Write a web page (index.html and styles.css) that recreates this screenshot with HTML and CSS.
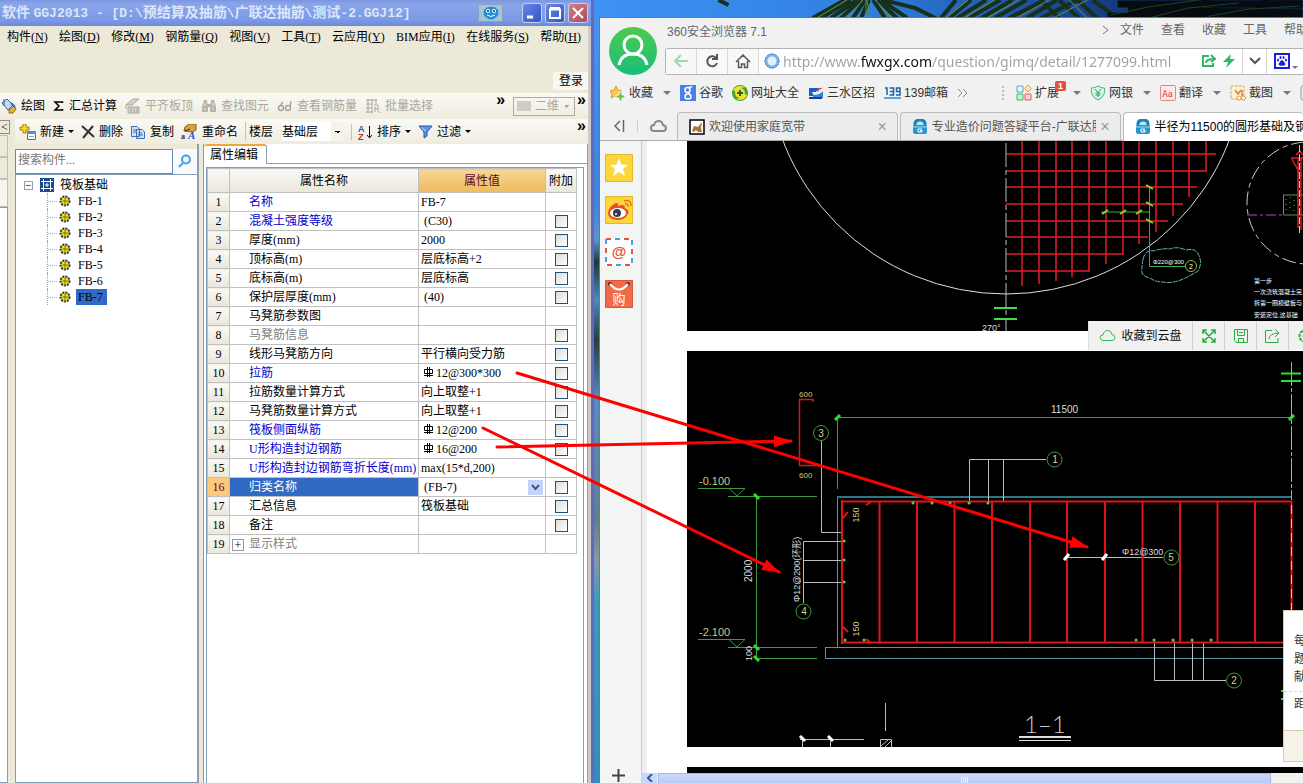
FILE: index.html
```html
<!DOCTYPE html>
<html lang="zh-CN">
<head>
	<meta charset="UTF-8">
	<title>GGJ2013</title>
	<link rel="stylesheet" href="styles.css">
</head>
<body>
	<div class="desktop">
		<svg class="wallpaper" viewBox="594 0 709 18" preserveAspectRatio="xMinYMin slice">
			<defs>
				<linearGradient id="sky" x1="0" x2="1"><stop offset="0" stop-color="#3f93f5"/><stop offset=".4" stop-color="#2f7fe0"/><stop offset=".7" stop-color="#16408a"/><stop offset="1" stop-color="#0b1830"/></linearGradient>
			</defs>
			<rect x="594" y="0" width="709" height="18" fill="url(#sky)"/>
			<g fill="none" stroke="#17301c" stroke-width="4">
				<path d="M818 18L850 0M826 18L856 0M836 18L862 0M846 18L866 0M858 18L870 0M866 18L874 0M890 18L878 0M902 18L882 0M912 18L886 0M725 0L735 5M940 18L920 8L888 0M945 18L960 0M953 18L975 0M961 18L990 0M972 18L1004 0M985 18L1016 0M998 18L1030 0M1012 18L1044 2M1030 18L1060 0M1044 18L1080 0M1062 18L1044 0M1082 18L1062 0M1100 18L1080 0M1120 18L1095 0"/>
				<path d="M1120 4H1303M1110 16H1303M1130 10L1303 13M1180 18L1210 0M1250 18L1270 0" stroke="#060b10" stroke-width="7"/>
			</g>
			<g fill="none" stroke="#5d8a4c">
				<path d="M822 18L852 0M852 18L868 0M871 18V0M875 18L872 0M897 18L880 0M950 18L972 0M968 18L998 0M990 18L1022 0M1020 18L1052 0M1056 18L1090 0M1090 18L1072 0"/>
				<path d="M1112 15L1150 7L1200 0M1150 18L1190 8L1240 3M1210 16L1250 9L1300 6" stroke="#20402c"/>
			</g>
		</svg>

		<!-- 钢筋软件窗口 -->
		<div class="app">
			<div class="appTitle">
				<span class="caption">软件 <span class="lat">GGJ2013 - [D:\</span>预结算及抽筋<span class="lat">\</span>广联达抽筋<span class="lat">\</span>测试<span class="lat">-2.GGJ12]</span></span>
				<span class="face"><svg width="18" height="16" viewBox="0 0 18 16"><path d="M2 5Q5 1 9 2Q13 1 16 5Q18 10 13 13Q9 16 5 13Q0 10 2 5Z" fill="#1c8fe0"/><circle cx="6" cy="6" r="2" fill="#fff"/><circle cx="12" cy="6" r="2" fill="#fff"/><circle cx="6" cy="6" r="1" fill="#123"/><circle cx="12" cy="6" r="1" fill="#123"/><path d="M5 10Q9 13 13 10" stroke="#fff" fill="none"/></svg></span>
				<button class="winBtn" aria-label="最小化"><svg width="18" height="18"><path d="M4 13H10" stroke="#fff" stroke-width="3"/></svg></button>
				<button class="winBtn" aria-label="最大化"><svg width="18" height="18"><path d="M4 5.500H14V14H4ZM4 4H14" stroke="#fff" stroke-width="2" fill="none"/></svg></button>
				<button class="winBtn close" aria-label="关闭"><svg width="18" height="18"><path d="M4 4L14 14M14 4L4 14" stroke="#fff" stroke-width="2"/></svg></button>
			</div>
			<div class="appBody">
				<nav class="appMenu">
					<a href="#">构件(<u>N</u>)</a><a href="#">绘图(<u>D</u>)</a><a href="#">修改(<u>M</u>)</a><a href="#">钢筋量(<u>Q</u>)</a><a href="#">视图(<u>V</u>)</a><a href="#">工具(<u>T</u>)</a><a href="#">云应用(<u>Y</u>)</a><a href="#">BIM应用(<u>I</u>)</a><a href="#">在线服务(<u>S</u>)</a><a href="#">帮助(<u>H</u>)</a>
				</nav>
				<div class="login"><button>登录</button></div>
				<div class="toolbar barTop">
					<button><svg width="16" height="16" viewBox="0 0 16 16"><path d="M1 5L6 1L12 7L7 12Z" fill="#c5daf2" stroke="#34649c"/><path d="M3 1V8" stroke="#34649c"/><path d="M8 12L13 8L15 11L12 15H8Z" fill="#e8b33c" stroke="#936817"/><path d="M10 5L14 9" stroke="#2b68b8" stroke-width="2"/></svg>绘图</button>
					<button><svg width="12" height="12" viewBox="0 0 12 12"><path d="M9.500 3V2H2L6 6L2 10H9.500V9" fill="none" stroke="#000" stroke-width="1.500"/></svg>汇总计算</button>
					<button disabled><svg width="16" height="16" viewBox="0 0 16 16"><path d="M1 7L8 1H14L7 7ZM3 9H14V15H3ZM6 10V14M9 11V14M12 10V14M1 7V11" fill="#d5d2c6" stroke="#aaa79a"/></svg>平齐板顶</button>
					<button disabled><svg width="16" height="16" viewBox="0 0 16 16"><path d="M3 2H6V5L7 6H9L10 5V2H13L15 9V14H9V9H7V14H1V9Z" fill="#b8b5a9"/><path d="M4 5V8M12 5V8M3 11H5M11 11H13" stroke="#efecdf"/></svg>查找图元</button>
					<button disabled><svg width="16" height="16" viewBox="0 0 16 16"><g fill="none" stroke="#aaa79a" stroke-width="1.500"><circle cx="4" cy="10" r="2.500"/><circle cx="11" cy="10" r="2.500"/><path d="M2 9L6 4M13 9L14 3"/></g></svg>查看钢筋量</button>
					<button disabled><svg width="16" height="16" viewBox="0 0 16 16"><path d="M1 2H12M1 6H7M1 10H7M1 14H8M3 1V15M7 1V15M11 1V6M9 7H13V12M10 9L15 15M10 9V14" fill="none" stroke="#aaa79a"/></svg>批量选择</button>
					<span class="more push">»</span>
					<span class="view"><i></i><select aria-label="视图" disabled><option>二维</option></select></span>
					<span class="more">»</span>
				</div>

				<div class="workArea">
					<div class="sideStrip"><button>&lt;</button><i></i><i></i><i class="lite"></i><div></div></div>
					<div class="work">
						<div class="toolbar barSub">
							<button><svg width="17" height="16" viewBox="0 0 17 16"><path d="M4 0H7V3H10V6H7V9H4V6H1V3H4Z" fill="#f7d92f" stroke="#a98208"/><path d="M8.500 7.500H16.500V15.500H8.500Z" fill="#fff" stroke="#3672b8"/><path d="M8 8.500H17" stroke="#4e8ee0" stroke-width="3"/><path d="M10 12.500H15" stroke="#8ab"/></svg>新建<i class="tri"></i></button>
							<button><svg width="14" height="14"><path d="M1 1L13 12M12 1L2 13" stroke="#333" stroke-width="2"/></svg>删除</button>
							<button><svg width="16" height="16" viewBox="0 0 16 16"><path d="M1.500 2.500H7L9.500 5V12.500H1.500ZM6.500 5.500H12L14.500 8V14.500H6.500Z" fill="#cfe2fa" stroke="#3b6eb8"/><path d="M3 6H7M3 8H6M8 9H12M8 11H13" stroke="#3b6eb8"/></svg>复制</button>
							<button><svg width="17" height="16" viewBox="0 0 17 16"><path d="M4 3L8 0H15V6L12 8L3 7Z" fill="#d7a440" stroke="#845c18"/><path d="M4 7L9 5" stroke="#3e2c10"/><text x="0" y="15" font-size="8" font-weight="bold" fill="#333">a</text><text x="7" y="15" font-size="11" font-weight="bold" font-style="italic" fill="#245cc0">A</text></svg>重命名</button>
							<label class="floor">楼层<select><option>基础层</option></select></label>
							<button class="sep"><svg width="16" height="16" viewBox="0 0 16 16"><text x="1" y="8" font-size="9" font-weight="bold" font-family="Liberation Sans" fill="#2a5fb0">A</text><text x="1" y="16" font-size="9" font-weight="bold" font-family="Liberation Sans" fill="#b0302a">Z</text><path d="M12.500 2V13M10 11L12.500 14L15 11" stroke="#111" fill="none"/></svg>排序<i class="tri"></i></button>
							<button><svg width="15" height="14" viewBox="0 0 15 14"><path d="M1 1H14L9 7V11L6 13V7Z" fill="#5d93ea" stroke="#2553a8"/><path d="M4 2.500L7 6" stroke="#d8e8ff"/></svg>过滤<i class="tri"></i></button>
							<span class="more push">»</span>
						</div>
						<div class="panes">
							<section class="treePane">
								<div class="search">
									<input type="text" placeholder="搜索构件..." aria-label="搜索构件">
									<button aria-label="搜索"><svg width="14" height="14"><circle cx="8" cy="5.500" r="4" fill="#eaf5ff" stroke="#4d9de0" stroke-width="2"/><path d="M5 9L1 13" stroke="#4d9de0" stroke-width="2"/></svg></button>
								</div>
								<div class="tree">
									<div class="root"><button aria-label="折叠">−</button><svg width="14" height="14"><path d="M0 0H14V14H0Z" fill="#1b4a94"/><path d="M1 3.500H13M1 10.500H13M3.500 1V13M10.500 1V13M7 5V9M5 7H9" stroke="#fff"/></svg><span>筏板基础</span></div>
									<ul>
										<li>FB-1</li><li>FB-2</li><li>FB-3</li><li>FB-4</li><li>FB-5</li><li>FB-6</li><li class="on">FB-7</li>
									</ul>
								</div>
							</section>
							<section class="propPane">
								<div class="tabStrip"><button>属性编辑</button></div>
								<div class="propBox">
									<table class="props">
										<colgroup><col class="cNo"><col class="cName"><col class="cVal"><col class="cAdd"></colgroup>
										<thead><tr><th></th><th>属性名称</th><th class="hot">属性值</th><th>附加</th></tr></thead>
										<tbody id="rows"></tbody>
									</table>
								</div>
							</section>
						</div>
					</div>
				</div>
			</div>
		</div>

		<!-- 浏览器窗口 -->
		<div class="browser">
			<header class="bHead">
				<svg class="avatar" width="48" height="48" viewBox="0 0 48 48"><defs><linearGradient id="av" x2="0" y2="1"><stop offset="0" stop-color="#4fc94f"/><stop offset="1" stop-color="#16bf78"/></linearGradient></defs><circle cx="24" cy="24" r="24" fill="url(#av)"/><g fill="none" stroke="#fff" stroke-width="3"><circle cx="24" cy="18" r="9"/><path d="M10 38Q12 27 24 27Q36 27 38 38"/></g></svg>
				<div class="bTop">
					<span>360安全浏览器 7.1</span>
					<nav><svg width="8" height="10"><path d="M1 1L6 5L1 9" fill="none" stroke="#777"/></svg><a href="#">文件</a><a href="#">查看</a><a href="#">收藏</a><a href="#">工具</a><a href="#">帮助</a></nav>
				</div>
				<div class="address">
					<button aria-label="后退"><svg width="16" height="14"><path d="M15 7H2M8 1L2 7L8 13" fill="none" stroke="#9bd9b2" stroke-width="2"/></svg></button>
					<button aria-label="刷新"><svg width="14" height="16"><path d="M11 5A5 5 0 1 0 12 10M12 1V6H7" fill="none" stroke="#555" stroke-width="2"/></svg></button>
					<button aria-label="主页"><svg width="16" height="15"><path d="M1 8L8 1L15 8M3.500 7V13.500H6.500V10H9.500V13.500H12.500V7" fill="none" stroke="#555" stroke-width="1.500"/></svg></button>
					<svg class="globe" width="16" height="16"><circle cx="8" cy="8" r="6" fill="#e4f1fd" stroke="#7db6ee" stroke-width="3"/><circle cx="8" cy="8" r="7" fill="none" stroke="#3d7fcc" stroke-dasharray="2 1"/></svg>
					<input class="url" type="text" aria-label="地址" value="http://www.fwxgx.com/question/gimq/detail/1277099.html">
					<svg width="15" height="14"><path d="M8 2H2V12H12V9M5 9Q5 5 13 5M10 1L14 5L10 8" fill="none" stroke="#2db965" stroke-width="2"/></svg>
					<svg width="12" height="14"><path d="M8 0L0 8H5L3 14L12 5H7Z" fill="#2db965"/></svg>
					<button class="drop" aria-label="展开"><svg width="12" height="8"><path d="M1 1L6 6L11 1" fill="none" stroke="#555" stroke-width="2"/></svg></button>
					<span class="engine"><svg width="16" height="16"><path d="M1 1H15V15H1Z" fill="#fff" stroke="#1d1de0" stroke-width="2"/><g fill="#1d1de0"><ellipse cx="4" cy="7" rx="1" ry="1.500"/><ellipse cx="6.500" cy="4.500" rx="1" ry="1.500"/><ellipse cx="9.500" cy="4.500" rx="1" ry="1.500"/><ellipse cx="12" cy="7" rx="1" ry="1.500"/><path d="M8 7Q9 7 11.500 11Q11 13.500 8 12.500Q5 13.500 4.500 11Q7 7 8 7Z"/></g></svg><i class="tri"></i></span>
				</div>
			</header>

			<div class="bookmarks">
				<a href="#"><svg width="16" height="16"><path d="M6 1L8 5L12 6L9 9V13L5 11L1 13L2 9L0 6L4 5Z" fill="#fbc94c" stroke="#d99b2c"/><path d="M9 7H12V10H15V13H12V16H9V13H6V10H9Z" fill="#6cc13a" stroke="#fff"/></svg>收藏<i class="tri"></i></a>
				<a href="#"><svg width="16" height="16"><path d="M0 0H16V16H0Z" fill="#4a80e8"/><g fill="none" stroke="#fff" stroke-width="1.500"><circle cx="7.500" cy="5" r="2.500"/><ellipse cx="8" cy="11.500" rx="3" ry="2.500"/><path d="M9 2H12M9 7V9"/></g></svg>谷歌</a>
				<a href="#"><svg width="16" height="16"><circle cx="8" cy="8" r="8" fill="#3fa535"/><path d="M1 5Q5-1 13 2Q7 3 4 7ZM15 10Q12 17 4 14Q10 13 12 9Z" fill="#f6dd2c"/><circle cx="8" cy="8" r="5" fill="#f6dd2c"/><path d="M8 5V11M5 8H11" stroke="#1d6b20" stroke-width="2"/></svg>网址大全</a>
				<a href="#"><svg width="16" height="14"><path d="M1 2H11L8 6H4L6 10H1Z" fill="#1c5fc0"/><path d="M5 9Q12 9 15 5V12H5Z" fill="#2f86e0"/><path d="M9 4Q11 1 15 2Q11 3 10 6Z" fill="#e03838"/><path d="M1 12H14" stroke="#123f90" stroke-width="2"/></svg>三水区招</a>
				<a href="#"><svg width="17" height="12"><path d="M1 1H3V8M5.500 1H9.500V8H5.500M6 4.500H9.500M16 4.500H12.500V1H16V8H12" fill="none" stroke="#1a63ad" stroke-width="1.500"/><path d="M0 11H17" stroke="#4eaad8" stroke-width="2"/></svg>139邮箱</a>
				<svg width="11" height="10"><path d="M1 1L5 5L1 9M6 1L10 5L6 9" fill="none" stroke="#888"/></svg>
				<div class="plugins">
					<i class="dots"></i>
					<a href="#"><svg width="16" height="16"><g fill="#e9f4fa" stroke="#54a7cf"><path d="M1 1H7V7H1Z"/><path d="M1 9H7V15H1Z" fill="#c9efd3" stroke="#41b96a"/><path d="M9 9H15V15H9Z" fill="#fbd0ce" stroke="#e5605a"/><path d="M12 0L15.500 3.500L12 7L8.500 3.500Z" fill="#fce3b6" stroke="#eda030"/></g></svg><span class="ext">扩展<b>1</b></span><i class="tri"></i></a>
					<a href="#"><svg width="16" height="16"><path d="M8 1Q11 3 14.500 3Q16 11 8 15Q0 11 1.500 3Q5 3 8 1Z" fill="#d9f5e4" stroke="#3cb878"/><path d="M5 4L8 7.500L11 4M8 7.500V12M5.500 8H10.500M5.500 10H10.500" fill="none" stroke="#2aa565"/></svg>网银<i class="tri"></i></a>
					<a href="#"><svg width="16" height="16"><rect x=".5" y=".5" width="15" height="15" rx="1" fill="#fde7e6" stroke="#d98c89"/><text x="2" y="12" font-size="9" font-family="Roboto" fill="#d9433c">Aa</text></svg>翻译<i class="tri"></i></a>
					<a href="#"><svg width="16" height="16"><path d="M1 1H14V14H1Z" fill="#fdf0d2" stroke="#e8a93c" stroke-dasharray="3 1"/><path d="M5 5L8 9L11 5M12 5V11" fill="none" stroke="#c98b36" stroke-width="1.500"/><circle cx="9" cy="13" r="2" fill="#fff" stroke="#e8942c"/><circle cx="13.500" cy="13" r="2" fill="#fff" stroke="#e8942c"/></svg>截图<i class="tri"></i></a>
					<svg width="16" height="16"><rect x="1" y="1" width="14" height="14" rx="2" fill="#eee" stroke="#999"/></svg>
				</div>
			</div>

			<div class="tabs">
				<div class="tabTools"><svg width="12" height="12"><path d="M7 1L2 6L7 11M10.500 0V12" fill="none" stroke="#666" stroke-width="1.500"/></svg><i></i><svg width="17" height="14"><path d="M4 12Q1 12 1 9Q1 6 4 6Q5 2 9 2Q12 2 13 6Q16 7 16 9Q16 12 13 12Z" fill="none" stroke="#888" stroke-width="2"/></svg></div>
				<a class="tab" href="#"><svg width="16" height="16"><path d="M1 1H15V15H1Z" fill="#fff" stroke="#000" stroke-width="1.500"/><path d="M3 12L5 7L9 8L13 3L12 9L13 13H9L7 11L5 13Z" fill="#a67834"/></svg><span>欢迎使用家庭宽带</span><b>×</b></a>
				<a class="tab" href="#"><svg width="16" height="16"><use href="#lock"/></svg><span>专业造价问题答疑平台-广联达服</span><b>×</b></a>
				<a class="tab active" href="#"><svg width="16" height="16"><g id="lock"><path d="M3 8V5Q3 1 8 1Q13 1 13 5V8" fill="#bfe6f7" stroke="#1d7fb8" stroke-width="3"/><rect x="1" y="6" width="14" height="9" rx="2" fill="#2795cf"/><path d="M1 8H15" stroke="#9adcf5"/><path d="M10 10H6V13H10V11.500H8" fill="none" stroke="#fff"/></g></svg><span>半径为11500的圆形基础及钢</span></a>
			</div>

			<div class="bMain">
				<aside class="rail">
					<a href="#" aria-label="收藏"><svg width="28" height="28"><path d="M.5.5H27.500V27.500H.5Z" fill="#fcd63a" stroke="#e3b62c"/><path d="M14 4L16.500 10.500L23 11L18 15L20 22L14 18L8 22L10 15L5 11L11.500 10.500Z" fill="#fff"/></svg></a>
					<a href="#" aria-label="微博"><svg width="28" height="28"><path d="M.5.5H27.500V27.500H.5Z" fill="#fcd63a" stroke="#e3b62c"/><path d="M3 17Q4 10 11 7Q14 7 13 10Q20 7 20 12Q25 14 23 18Q20 24 12 24Q3 23 3 17Z" fill="#e8502c"/><ellipse cx="13" cy="17" rx="8" ry="5" fill="#fff"/><circle cx="12" cy="17" r="4" fill="#333b4d"/><circle cx="11" cy="18" r="1" fill="#fff"/><path d="M20 8Q23 7 23 11M19 5Q26 3 26 10" fill="none" stroke="#e8742c" stroke-width="1.500"/></svg></a>
					<a href="#" aria-label="邮箱"><svg width="28" height="28"><path d="M0 0H28V28H0Z" fill="#fff"/><path d="M1 1H27V27H1Z" fill="none" stroke="#df5648" stroke-width="2" stroke-dasharray="5 13"/><path d="M1 1H27V27H1Z" fill="none" stroke="#4a9fd8" stroke-width="2" stroke-dasharray="5 13" stroke-dashoffset="-9"/><text x="14" y="19" font-size="15" font-weight="bold" font-family="Liberation Sans" text-anchor="middle" fill="#e8502c">@</text></svg></a>
					<a href="#" aria-label="购物"><svg width="28" height="28"><path d="M.5.5H27.500V27.500H.5Z" fill="#f2694a" stroke="#d9583a"/><circle cx="5" cy="4" r="2" fill="#5c2a18"/><circle cx="23" cy="4" r="2" fill="#5c2a18"/><path d="M5 4Q14 15 23 4" fill="none" stroke="#fff" stroke-width="2"/><text x="14" y="24" font-size="13" font-family="Noto Sans CJK SC" text-anchor="middle" fill="#fff">购</text></svg></a>
					<button aria-label="添加"><svg width="13" height="13"><path d="M6.500 0V13M0 6.500H13" stroke="#444" stroke-width="2"/></svg></button>
				</aside>
				<div class="pageWrap">
					<div class="page">
						<svg class="cad plan" viewBox="687 141 616 190" preserveAspectRatio="xMinYMin slice">
							<g fill="none" stroke="#e01c24" stroke-width="1.500">
								<path d="M1022 141V286M1039 141V284M1056 141V281M1072 141V277M1089 141V272M1106 141V264M1123 141V255M1139 141V244M1156 141V232M1173 141V216M1189 141V197M1206 141V171"/>
								<path d="M1006 154H1216M1006 171H1207M1006 187H1197M1006 204H1183M1006 221H1168M1006 237H1148M1006 254H1123M1006 271H1089"/>
							</g>
							<circle cx="1006" cy="55" r="239" fill="none" stroke="#ddd"/>
							<path d="M1006 143V331" stroke="#bbb" stroke-dasharray="24 3 5 3" fill="none"/>
							<path d="M994 308H1017M994 319H1017" stroke="#3be04a" stroke-width="2"/>
							<text x="982" y="331" font-size="9" fill="#ddd">270°</text>
							<path d="M1101 212H1149M1149.500 186V266.500H1185" fill="none" stroke="#35b046"/>
							<path d="M1102 214L1108 210M1120 214L1126 210M1136 214L1142 210M1146 185L1153 189M1146 202L1153 206M1146 219L1153 223" stroke="#8ed62c" stroke-width="2"/>
							<circle cx="1191" cy="266" r="5.500" fill="none" stroke="#8ac03a"/>
							<text x="1189" y="269" font-size="7" fill="#fff">2</text>
							<text x="1153" y="264" font-size="6" fill="#fff">Φ220@300</text>
							<path d="M1143 259Q1146 249 1153 251Q1163 248 1170 249Q1177 246 1186 250Q1196 248 1198 254Q1203 262 1198 271Q1190 276 1183 279Q1172 284 1163 282Q1155 282 1150 278Q1140 276 1142 268Q1142 264 1143 259Z" fill="none" stroke="#5fb8bd" stroke-dasharray="5 1"/>
							<circle cx="1308" cy="203" r="61" fill="none" stroke="#ccc" stroke-dasharray="14 4 5 4"/>
							<path d="M1247 215H1284" stroke="#b04cb8" stroke-dasharray="10 3 3 3"/>
							<path d="M1283.500 195H1303M1283.500 195V215H1303" fill="none" stroke="#5f9a48"/>
							<path d="M1286 199V213M1290 197V211M1294 200V213" stroke="#45bf45" stroke-dasharray="1 4"/>
							<path d="M1291 158H1303M1292 159L1300 174M1296 155L1300 151L1303 155M1298 158V228M1301 158V230" fill="none" stroke="#e01c24" stroke-width="1.500"/>
							<path d="M1299.500 145V234" stroke="#ccc" stroke-dasharray="7 2"/>
							<g fill="#fff" font-size="6"><text x="1254" y="283">第一步</text><text x="1254" y="294">一次浇筑混凝土完</text><text x="1254" y="305">拆第一圈模壁板与</text><text x="1254" y="317">安装定位,这基础</text></g>
						</svg>
						<svg class="cad section" viewBox="687 351 616 396" preserveAspectRatio="xMinYMin slice">
							<g fill="none" stroke="#3c9a44">
								<path d="M837.500 489V417.500H1291M698 488.500H745L737 496L729 488.500M728 496.500H817M756.500 496V658M698 639.500H745L737 647L729 639.500M728 647.500H817M756 658.500H817"/>
								<circle cx="821" cy="433" r="7.500"/><circle cx="1054.500" cy="459.500" r="7.500"/><circle cx="803.500" cy="611.500" r="7.500"/><circle cx="1234" cy="680.500" r="7.500"/><circle cx="1171.500" cy="557.500" r="7.500"/>
							</g>
							<path d="M835 420L840 415M1289 420L1294 415M754 494L759 499M754 645L759 650M754 656L759 661" stroke="#28e030" stroke-width="3"/>
							<path d="M1281 373.500H1301M1281 381H1301M1281 691H1290M1281 699H1290" stroke="#28e030" stroke-width="2"/>
							<path d="M837.500 647V496.500M825.500 647.500H1303M825.500 658.500H1303M825.500 647V659" fill="none" stroke="#4d9aa5"/>
							<path d="M837 497H1292" stroke="#2f7388" stroke-width="2"/>
							<path d="M1291.500 362V500" stroke="#aaa" stroke-dasharray="24 2 4 2"/>
							<g fill="none" stroke="#bbb">
								<path d="M821.500 441V532.500H842M969.500 502V459.500H1046M988.500 459V502M1003.500 459V502"/>
								<path d="M842 541.500H803.500V603M803 560.500H842M803 582.500H842M1154.500 641V680.500H1226M1174.500 641V680M1192.500 641V680M1203.500 643V680M1067 557.500H1163"/>
								<path d="M885.500 703V731M800 739.500H864M802.500 739V747M830.500 739V747M880.500 747V739.500H891.500V747M881 746L888 740M885 747L891 741"/>
							</g>
							<g fill="none" stroke="#e01418">
								<path d="M813 402V399.500H799.500V465.500H820" stroke-width="1.500"/>
								<path d="M879.500 501V642M917 501V642M954.500 501V642M992 501V642M1030 501V642M1067 501V642M1105 501V642M1142.500 501V642M1180 501V642M1217.500 501V642M1255 501V642" stroke-width="2"/>
								<path d="M842 500V644M841 501.500H1292M841 642.500H1292M1291.500 501V642M842 519L848 512M866 505L871 502M842 626L848 632M866 639L871 643" stroke-width="2"/>
							</g>
							<path d="M1291.500 505V642" stroke="#ccc" stroke-dasharray="9 5"/>
							<path d="M913 503h.1M932 503h.1M950 503h.1M969 503h.1M988 503h.1M844 541h.1M844 560h.1M844 582h.1M845 640h.1M864 640h.1M1136 640h.1M1154 640h.1M1173 640h.1M1192 640h.1M1211 640h.1" stroke="#4fd04a" stroke-width="3" stroke-linecap="round"/>
							<path d="M1064 560L1069 554M1102 560L1107 554M800 736L805 741M828 736L833 741" stroke="#fff" stroke-width="3"/>
							<g fill="#cfc77d" font-size="11"><text x="699" y="485">-0.100</text><text x="699" y="636">-2.100</text></g>
							<g fill="#cfc77d" font-size="8"><text x="799" y="397">600</text><text x="799" y="478">600</text></g>
							<g fill="#d9cf86" font-size="10" text-anchor="middle"><text x="821" y="437">3</text><text x="1055" y="463">1</text><text x="804" y="615">4</text><text x="1234" y="684">2</text><text x="1171" y="561">5</text>
								<text transform="translate(859 515) rotate(-90)" font-size="9">150</text><text transform="translate(859 629) rotate(-90)" font-size="9">150</text></g>
							<g fill="#ddd" font-size="10"><text x="1051" y="413">11500</text><text x="1122" y="555" font-size="9">Φ12@300</text><text transform="translate(752 582) rotate(-90)">2000</text><text transform="translate(752 661) rotate(-90)" font-size="9">100</text><text transform="translate(800 602) rotate(-90)" font-size="9">Φ12@200(环形)</text></g>
							<text class="mark" x="1045" y="733">1–1</text>
							<path d="M1019 737H1071" stroke="#ddd" stroke-width="2"/><path d="M1019 740.500H1071" stroke="#ddd"/>
						</svg>
						<div class="cad next"></div>
						<div class="saveBar">
							<button><svg width="17" height="13"><path d="M4 11.500Q1 11 1 8.500Q1 6 4 6Q5 1.500 9 1.500Q12 1.500 13 5.500Q16 6 16 8.500Q16 11.500 13 11.500Z" fill="none" stroke="#33b84c"/></svg>收藏到云盘</button>
							<button aria-label="全屏"><svg width="14" height="14"><path d="M1 5V1H5M9 1H13V5M13 9V13H9M5 13H1V9M1 1L13 13M13 1L1 13" fill="none" stroke="#22b03c" stroke-width="1.500"/></svg></button>
							<button aria-label="保存"><svg width="14" height="14"><path d="M.5.5H13.500V13.500H2.500L.5 11.500ZM3.500.5V6.500H10.500V.5M4.500 13V9.500H9.500V13M5 3.500H9" fill="none" stroke="#22b03c"/></svg></button>
							<button aria-label="分享"><svg width="15" height="14"><path d="M7 1.500H.5V13.500H13V9M4 10Q4 4.500 14 4M10 .5L14 4L10 8" fill="none" stroke="#22b03c"/></svg></button>
							<button aria-label="设置"><svg width="14" height="14"><circle cx="7" cy="7" r="5.500" fill="none" stroke="#22b03c" stroke-width="2" stroke-dasharray="3 1"/><circle cx="7" cy="7" r="2" fill="none" stroke="#22b03c"/></svg></button>
						</div>
						<div class="notice"><p>每<br>题<br>献</p><p>距</p><footer></footer></div>
					</div>
					<div class="hScroll"><button aria-label="向左"><svg width="6" height="8"><path d="M5 0L1 4L5 8" fill="none" stroke="#3b5a94" stroke-width="2"/></svg></button><i></i></div>
				</div>
			</div>
		</div>

		<!-- 标注箭头 -->
		<svg class="arrows">
			<defs><marker id="head" markerUnits="userSpaceOnUse" markerWidth="18" markerHeight="12" refX="17" refY="6" orient="auto"><path d="M0 0L18 6L0 12Z" fill="#f00"/></marker></defs>
			<g stroke="#f00" stroke-width="3" stroke-linecap="round">
				<path d="M517 373L1087 547" marker-end="url(#head)"/><path d="M497 447L791 441" marker-end="url(#head)"/><path d="M483 428L779 572" marker-end="url(#head)"/>
			</g>
		</svg>
	</div>
	<script src="script.js"></script>
</body>
</html>
```
FILE: styles.css
```css
*{box-sizing: border-box;}
html,body,ul,p{margin:0px;padding:0px;}
ul{
	list-style: none;
}
a{
	color: inherit;
	text-decoration: none;
}
button,select,input{
	font: inherit;
	color: inherit;
	margin: 0;
	padding: 0;
	border: 0;
	border-radius: 0;
	background: none;
}
select{
	appearance: none;
}
svg{
	flex: none;
}
body{
	font-size: 12px;
	line-height: 16px;
	color: #000;
	white-space: nowrap;
	overflow: hidden;
}
.tri{
	border: 3px solid transparent;
	border-top-color: #000;
	border-bottom: 0;
}
.desktop{
	position: relative;
	height: 100vh;
	display: grid;
	grid-template-columns: minmax(0,594fr) minmax(0,709fr);
	background: linear-gradient(#4a94ec 0,#3c84dc 200px,#5a94cc 240px,#1c3a34 262px,#5088b8 300px,#24403c 340px,#5a8cc0 400px,#5f7f8c 520px,#8899a4 560px,#3c9ab8 600px,#2f8fb8 100%);
}
.wallpaper{
	position: absolute;
	top: 0;
	right: 0;
	width: 55%;
	height: 18px;
}

/* 左侧软件 */
.app{
	position: relative;
	display: flex;
	flex-direction: column;
	min-height: 0;
	border-right: 3px solid #6468bd;
	font-family: "Liberation Serif","Noto Sans CJK SC",serif;
	background: #ece9d8;
}
.appTitle{
	display: flex;
	align-items: center;
	gap: 3px;
	height: 26px;
	padding: 0 3px 0 2px;
	background: linear-gradient(#7a96df,#8aa5ea 4px,#7b9ae6 20px,#6d89d8);
}
.caption{
	flex: 1;
	overflow: hidden;
	color: #dce6fb;
	font-size: 14px;
	font-weight: bold;
}
.lat{
	font-family: "Liberation Mono",monospace;
	font-size: 13px;
}
.face{
	display: flex;
	justify-content: center;
	align-items: center;
	width: 25px;
	height: 18px;
	margin-right: 16px;
	background: #a8c4d4;
	border: 1px solid #8aa0c0;
}
.winBtn{
	display: flex;
	width: 20px;
	height: 20px;
	border: 1px solid #c3d0f4;
	border-radius: 3px;
	background: linear-gradient(135deg,#6a88e2,#2f55c8);
}
.winBtn.close{
	background: linear-gradient(135deg,#cf8088,#b0485a);
}
.appBody{
	flex: 1;
	min-height: 0;
	display: flex;
	flex-direction: column;
	border-right: 3px solid #d0c8c8;
}
.appMenu{
	display: flex;
	justify-content: space-between;
	padding: 3px 7px 0 7px;
	height: 46px;
}
.login{
	display: flex;
	justify-content: flex-end;
}
.login button{
	height: 18px;
	padding: 0 5px 0 6px;
	background: #f8f7f0;
}
.toolbar{
	display: flex;
	align-items: center;
	gap: 8px;
	background: linear-gradient(#faf9f4,#efecdf);
}
.toolbar button{
	display: flex;
	align-items: center;
	gap: 4px;
}
.toolbar button:disabled{
	color: #aaa79a;
}
.barTop{
	height: 26px;
	margin-top: 3px;
	padding: 0 2px 0 1px;
}
.barSub{
	height: 25px;
	padding: 0 2px 0 4px;
	gap: 7px;
}
.more{
	align-self: flex-start;
	font-family: "Liberation Sans",sans-serif;
	font-size: 16px;
	line-height: 14px;
	font-weight: bold;
}
.push{
	margin-left: auto;
}
.view{
	display: flex;
	align-items: center;
	gap: 4px;
	width: 62px;
	height: 19px;
	margin-right: -6px;
	padding: 0 3px;
	border: 1px solid #aeab9e;
	color: #aaa79a;
}
.view i{
	width: 14px;
	height: 10px;
	background: #cfccc0;
}
.view select{
	flex: 1;
	height: 16px;
	opacity: 1;
	background: linear-gradient(-135deg,#aaa79a 50%,transparent 50%) 29px 7px/3px 3px no-repeat,linear-gradient(135deg,#aaa79a 50%,transparent 50%) 32px 7px/3px 3px no-repeat;
}
.floor{
	display: flex;
	align-items: center;
	gap: 9px;
	padding-left: 3px;
	border-left: 1px solid #c5c2b4;
}
.floor select{
	width: 62px;
	height: 19px;
	background: linear-gradient(-135deg,#000 50%,transparent 50%) 53px 9px/3px 3px no-repeat,linear-gradient(135deg,#000 50%,transparent 50%) 56px 9px/3px 3px no-repeat,linear-gradient(90deg,#fff 49px,#f5f3ea 49px);
}
.toolbar .sep{
	padding-left: 5px;
	border-left: 1px solid #c5c2b4;
}
.workArea{
	flex: 1;
	min-height: 0;
	display: flex;
	gap: 7px;
}
.sideStrip{
	width: 8px;
	display: flex;
	flex-direction: column;
}
.sideStrip button{
	height: 14px;
	margin: 1px -2px 1px 0;
	line-height: 12px;
	border: 1px solid #8f8c80;
	border-left: 0;
}
.sideStrip i{
	height: 22px;
	border: 1px solid #c4c0ae;
	border-left: 0;
}
.sideStrip .lite{
	height: 28px;
	background: #f7f5ee;
}
.sideStrip div{
	flex: 1;
	background: #fff;
	border: 1px solid #7f9db9;
	border-left: 0;
}
.work{
	flex: 1;
	min-width: 0;
	display: flex;
	flex-direction: column;
}
.panes{
	flex: 1;
	min-height: 0;
	display: flex;
	gap: 4px;
}
.treePane{
	flex: 0 0 184px;
	min-width: 0;
	display: flex;
	flex-direction: column;
	padding-top: 5px;
	border-right: 2px solid #8f9fae;
}
.search{
	display: flex;
	height: 25px;
	background: #f8fafc;
}
.search input{
	flex: 1;
	min-width: 0;
	padding: 0 2px 4px;
	background: #fff;
	border: 1px solid #5f8db8;
}
.search input::placeholder{
	color: #777;
}
.search button{
	width: 24px;
	padding-top: 3px;
}
.tree{
	flex: 1;
	padding: 2px 8px;
	background: #fff;
	border: 1px solid #7f9db9;
	border-right: 0;
}
.root{
	display: flex;
	align-items: center;
	gap: 6px;
}
.root button{
	width: 9px;
	height: 9px;
	line-height: 6px;
	border: 1px solid #8fa0b8;
}
.root svg{
	margin-left: 1px;
}
.tree ul{
	margin-left: 23px;
}
.tree li{
	display: flex;
	align-items: center;
	height: 16px;
	background: repeating-linear-gradient(90deg,#b0b0b0 0 1px,transparent 1px 2px) 0 8px/10px 1px no-repeat;
	border-left: 1px dotted #a0a0a0;
	padding-left: 11px;
}
.tree li svg{
	margin-right: 5px;
}
.tree li span{
	padding: 0 4px 0 2px;
}
.tree .on span{
	background: #316ac5;
}
.propPane{
	flex: 1;
	min-width: 0;
	display: flex;
	flex-direction: column;
	background: #fff;
	border-left: 1px solid #7f9db9;
	border-right: 1px solid #8f9fae;
}
.tabStrip{
	height: 20px;
	border-bottom: 1px solid #8f9fae;
}
.tabStrip button{
	height: 20px;
	padding: 0 8px 0 6px;
	background: #fff;
	border-top: 2px solid #f0a83c;
	border-right: 1px solid #8f9fae;
	border-radius: 3px 3px 0 0;
}
.propBox{
	flex: 1;
	margin: 3px 3px 0 2px;
	border: 1px solid #7f9db9;
	border-bottom: 0;
}
.props{
	width: calc(100% - 6px);
	table-layout: fixed;
	border-collapse: collapse;
}
.cNo{width: 22px;}
.cVal{width: 127px;}
.cAdd{width: 31px;}
.props th,.props td{
	height: 19px;
	padding: 0;
	border: 1px solid #c0c0c0;
	line-height: 16px;
}
.props th{
	font-weight: normal;
	text-align: center;
	background: linear-gradient(#faf9f5,#e9e7da);
}
.props thead th{
	height: 24px;
}
.props thead .hot{
	background: linear-gradient(#f9d596,#eebb5e);
	color: #5a0a2c;
}
.props td{
	padding-left: 19px;
}
.props .val{
	padding-left: 2px;
}
.props .val.pad{
	padding-left: 5px;
}
.props .add{
	padding: 0;
	text-align: center;
}
.props input{
	display: block;
	margin: 0 auto;
	appearance: none;
	width: 13px;
	height: 13px;
	border: 1px solid #1c5180;
	background: linear-gradient(135deg,#dcdcd7,#fff);
}
.props .key{
	color: #0000d0;
}
.props .dim{
	color: #808080;
}
.props .sel th{
	background: #fcc87c;
	color: #5a0a2c;
}
.props .sel .name{
	background: #316ac5;
	color: #fff;
}
.props select{
	display: block;
	width: calc(100% - 1px);
	height: 16px;
	line-height: 16px;
}
.combo{
	display: flex;
	align-items: center;
}
.combo svg{
	margin: 0 1px 0 -16px;
	background: #c3d3fa;
	pointer-events: none;
}
.expand{
	width: 12px;
	height: 12px;
	margin: 0 5px 0 -17px;
	line-height: 9px;
	color: #000;
	border: 1px solid #999;
	vertical-align: middle;
}

/* 右侧浏览器 */
.browser{
	position: relative;
	display: flex;
	flex-direction: column;
	min-height: 0;
	margin: 17px 0 0 5px;
	overflow: hidden;
	border-top: 1px solid #777;
	border-left: 1px solid #777;
	background: #f1f1f1;
	font-family: "Noto Sans","Noto Sans CJK SC",sans-serif;
	color: #333;
}
.bHead{
	display: grid;
	grid-template-columns: 48px minmax(0,1fr);
	column-gap: 8px;
	padding: 3px 0 0 9px;
}
.avatar{
	grid-row: 1 / 3;
	margin-top: 6px;
}
.bTop{
	display: flex;
	justify-content: space-between;
	align-items: center;
	height: 26px;
	padding: 0 0 8px 2px;
	color: #666;
	font-family: "Liberation Sans","Noto Sans CJK SC",sans-serif;
}
.bTop > span{
	padding-top: 4px;
}
.bTop nav{
	display: flex;
	align-items: center;
	gap: 17px;
	margin-right: -5px;
}
.bTop nav svg{
	margin-right: -7px;
}
.address{
	display: flex;
	align-items: center;
	gap: 7px;
	height: 27px;
	background: #fff;
	border: 1px solid #b4b4b4;
	border-right: 0;
	border-radius: 3px 0 0 3px;
}
.address button{
	display: flex;
	justify-content: center;
	align-items: center;
	align-self: stretch;
	width: 31px;
	margin-right: -7px;
	background: #f8f8f8;
	border-right: 1px solid #d8d8d8;
}
.globe{
	margin-left: 5px;
}
.url{
	flex: 1;
	min-width: 0;
	margin-left: -4px;
	font-family: "Noto Sans",sans-serif;
	font-size: 14px;
	height: 24px;
	color: transparent;
	background: linear-gradient(90deg,#a0a0a0 78px,#111 78px,#111 149px,#a0a0a0 149px);
	-webkit-background-clip: text;
	background-clip: text;
}
.address .drop{
	width: 25px;
	margin-right: 0;
	background: #fff;
	border-left: 1px solid #d8d8d8;
}
.engine{
	display: flex;
	align-items: flex-end;
	gap: 2px;
	padding-right: 5px;
}
.engine .tri,.bookmarks .tri{
	border-top-color: #777;
}
.bookmarks{
	display: flex;
	align-items: center;
	gap: 9px;
	height: 36px;
	padding: 0 0 0 10px;
	font-family: "Liberation Sans","Noto Sans CJK SC",sans-serif;
}
.bookmarks a{
	display: flex;
	align-items: center;
	gap: 3px;
}
.bookmarks .tri{
	border-width: 4px 4px 0;
	margin-left: 7px;
}
.plugins{
	display: flex;
	align-items: center;
	gap: 9px;
	margin-left: auto;
	margin-right: -13px;
}
.dots{
	height: 14px;
	margin-right: 3px;
	border-left: 2px dotted #bbb;
}
.ext{
	position: relative;
	margin-right: 4px;
}
.ext b{
	position: absolute;
	top: -4px;
	right: -7px;
	width: 11px;
	border-radius: 2px;
	background: #e5503c;
	color: #fff;
	font-size: 9px;
	line-height: 10px;
	text-align: center;
}
.tabs{
	display: flex;
	gap: 2px;
	height: 30px;
	font-family: "Liberation Sans","Noto Sans CJK SC",sans-serif;
	border-bottom: 1px solid #aaa;
}
.tabTools{
	display: flex;
	align-items: center;
	gap: 12px;
	flex: 0 0 75px;
	padding-left: 13px;
}
.tabTools i{
	height: 12px;
	border-left: 1px solid #ccc;
}
.tab{
	flex: 222 1 0;
	min-width: 0;
	display: flex;
	align-items: center;
	gap: 4px;
	margin-top: 1px;
	padding: 0 10px 0 11px;
	color: #555;
	border: 1px solid #bbb;
	border-bottom: 0;
	border-radius: 4px 4px 0 0;
	background: #ececec;
}
.tab span{
	flex: 1;
	min-width: 0;
	overflow: hidden;
}
.tab b{
	color: #999;
	font-size: 16px;
	font-weight: normal;
}
.tab.active{
	flex: 189 1 0;
	padding-right: 0;
	margin-bottom: -1px;
	border-right: 0;
	background: #fff;
	color: #000;
}
.bMain{
	flex: 1;
	min-height: 0;
	display: flex;
}
.rail{
	display: flex;
	flex-direction: column;
	align-items: center;
	gap: 14px;
	width: 42px;
	padding: 13px 4px 0 0;
	background: #f3f5f5;
	border-right: 1px solid #ccc;
}
.rail a,.rail button{
	display: flex;
}
.rail button{
	margin-top: auto;
	height: 14px;
}
.pageWrap{
	flex: 1;
	min-width: 0;
	display: flex;
	flex-direction: column;
	background: #fff;
}
.page{
	position: relative;
	flex: 1;
	min-height: 0;
	overflow: hidden;
	padding: 0 0 0 40px;
	border-left: 5px solid #eee;
}
.cad{
	display: block;
	width: 100%;
	margin-bottom: 20px;
	background: #000;
	font-family: "Liberation Sans Narrow","Liberation Sans","Noto Sans CJK SC",sans-serif;
}
.plan{height: 190px;}
.section{height: 396px;}
.next{height: 20px;}
.mark{
	font-family: Lato,sans-serif;
	font-size: 24px;
	font-weight: 300;
	text-anchor: middle;
	fill: #ccc;
}
.saveBar{
	position: absolute;
	top: 180px;
	right: -17px;
	display: flex;
	height: 29px;
	background: #f1f1f1;
	color: #111;
	border-left: 1px solid #ddd;
}
.saveBar button{
	display: flex;
	justify-content: center;
	align-items: center;
	gap: 5px;
	width: 32px;
	border-left: 1px solid #d0d0d0;
}
.saveBar button:first-child{
	width: 103px;
	border: 0;
}
.notice{
	position: absolute;
	right: -40px;
	bottom: 11px;
	width: 60px;
	height: 152px;
	display: flex;
	flex-direction: column;
	background: #fff;
	border: 1px solid #d8cbb0;
}
.notice p{
	padding: 21px 0 5px 10px;
	line-height: 18px;
	border-bottom: 1px dashed #e8cfc0;
}
.notice p + p{
	padding: 3px 0 0 10px;
	border: 0;
}
.notice footer{
	height: 31px;
	margin-top: auto;
	background: #f7f2e8;
	border-top: 1px solid #d8cbb0;
}
.hScroll{
	display: flex;
	height: 10px;
	padding-right: 32px;
	background: #f3f2ee;
}
.hScroll button{
	width: 15px;
	margin-right: 1px;
	display: flex;
	justify-content: center;
	align-items: center;
	background: #c8d6fb;
}
.hScroll i{
	flex: 1;
	border: 1px solid #9fb4e8;
	border-bottom: 0;
	background: repeating-linear-gradient(90deg,#eef4fe 0 1px,transparent 1px 2px) center bottom/8px 6px no-repeat,linear-gradient(#cad8fd,#bccbf6);
}
.arrows{
	position: absolute;
	top: 0;
	left: 0;
	width: 100%;
	height: 100%;
	pointer-events: none;
}
```
FILE: script.js
```js
window.onload = function(){
	// [属性名称, 属性值, 是否有附加, 样式]
	var list = [
		["名称","FB-7",0,"key"],
		["混凝土强度等级","(C30)",1,"key"],
		["厚度(mm)","2000",1,""],
		["顶标高(m)","层底标高+2",1,""],
		["底标高(m)","层底标高",1,""],
		["保护层厚度(mm)","(40)",1,""],
		["马凳筋参数图","",0,""],
		["马凳筋信息","",1,"dim"],
		["线形马凳筋方向","平行横向受力筋",1,""],
		["拉筋","⏀12@300*300",1,"key"],
		["拉筋数量计算方式","向上取整+1",1,""],
		["马凳筋数量计算方式","向上取整+1",1,""],
		["筏板侧面纵筋","⏀12@200",1,"key"],
		["U形构造封边钢筋","⏀16@200",1,"key"],
		["U形构造封边钢筋弯折长度(mm)","max(15*d,200)",0,"key"],
		["归类名称","(FB-7)",1,""],
		["汇总信息","筏板基础",1,""],
		["备注","",1,""],
		["显示样式","",0,"dim"]
	];
	var bar = '<svg width="9" height="10" viewBox="0 0 9 10"><path d="M3.500 0V10M5.500 0V10M0 8.500H9M.5 2.500H8.500V6.500H.5Z" fill="none" stroke="#000"/></svg> ';
	var html = "";
	list.forEach(function(r,i){
		var n = i + 1;
		var pad = /^[(⏀]/.test(r[1]) ? " pad" : "";
		var val = r[1].replace("⏀",bar);
		if(n == 16){
			val = '<div class="combo"><select aria-label="归类名称"><option>(FB-7)</option></select><svg width="15" height="15"><path d="M4 5L7.500 9L11 5" fill="none" stroke="#3b5a94" stroke-width="2"/></svg></div>';
		}
		html += '<tr' + (n == 16 ? ' class="sel"' : '') + '><th>' + n + '</th><td class="name ' + r[3] + '">' + (n == 19 ? '<button class="expand" aria-label="展开">+</button>' : '') + r[0] + '</td><td class="val' + pad + '">' + val + '</td><td class="add">' + (r[2] ? '<input type="checkbox" aria-label="' + r[0] + '">' : '') + '</td></tr>';
	});
	document.getElementById("rows").innerHTML = html;

	var gear = '<svg width="12" height="12"><circle cx="6" cy="6" r="4.500" fill="#f2e52c" stroke="#333" stroke-width="2" stroke-dasharray="2 1"/><path d="M6 3V9M3 6H9" stroke="#776a10"/></svg>';
	var items = Array.prototype.slice.apply(document.querySelectorAll(".tree li"));
	items.forEach(function(li){
		li.innerHTML = gear + "<span>" + li.textContent + "</span>";
	});
}
```
